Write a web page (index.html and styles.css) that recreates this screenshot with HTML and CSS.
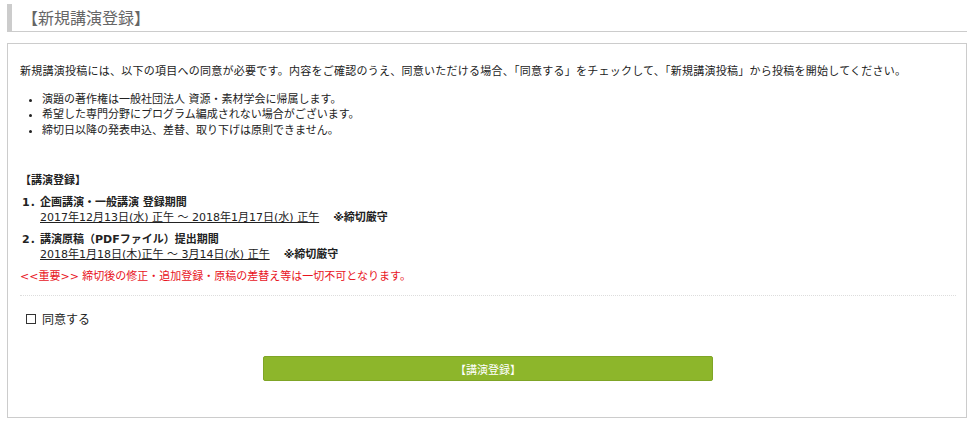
FILE: index.html
```html
<!DOCTYPE html>
<html lang="ja">
<head>
<meta charset="utf-8">
<title>新規講演登録</title>
<link rel="stylesheet" href="styles.css">
</head>
<body>
<div class="page">
  <h1 class="title">【新規講演登録】</h1>
  <div class="box">
    <p class="intro">新規講演投稿には、以下の項目への同意が必要です。内容をご確認のうえ、同意いただける場合、「同意する」をチェックして、「新規講演投稿」から投稿を開始してください。</p>
    <ul class="notes">
      <li>演題の著作権は一般社団法人 資源・素材学会に帰属します。</li>
      <li>希望した専門分野にプログラム編成されない場合がございます。</li>
      <li>締切日以降の発表申込、差替、取り下げは原則できません。</li>
    </ul>
    <p class="head">【講演登録】</p>
    <div class="item">
      <span class="num">1．</span>
      <div class="item-body">
        <div class="item-title">企画講演・一般講演 登録期間</div>
        <div class="period"><u>2017年12月13日(水) 正午 ～ 2018年1月17日(水) 正午</u><b class="strict">※締切厳守</b></div>
      </div>
    </div>
    <div class="item">
      <span class="num">2．</span>
      <div class="item-body">
        <div class="item-title">講演原稿（PDFファイル）提出期間</div>
        <div class="period"><u>2018年1月18日(木)正午 ～ 3月14日(水) 正午</u><b class="strict">※締切厳守</b></div>
      </div>
    </div>
    <p class="warn">&lt;&lt;重要&gt;&gt; 締切後の修正・追加登録・原稿の差替え等は一切不可となります。</p>
    <div class="agree"><span class="check"></span>同意する</div>
    <div class="actions"><button class="submit" type="button">【講演登録】</button></div>
  </div>
</div>
</body>
</html>
```
FILE: styles.css
```css
html, body {
  margin: 0;
  padding: 0;
  background: #fff;
}
body {
  font-family: "DejaVu Sans", "Noto Sans CJK JP", sans-serif;
  font-size: 11px;
  color: #222;
}
.page {
  padding: 4px 8px 0 7px;
}
.title {
  margin: 0;
  height: 28px;
  line-height: 27px;
  font-family: "Noto Sans CJK JP", sans-serif;
  font-size: 16px;
  font-weight: normal;
  color: #666;
  border-left: 5px solid #ccc;
  border-bottom: 1px solid #ccc;
  padding-left: 10px;
  box-sizing: border-box;
}
.box {
  margin-top: 11px;
  border: 1px solid #ccc;
  padding: 20px 10px 36px 12px;
  line-height: 15.5px;
}
.intro {
  margin: 0;
  letter-spacing: 0.25px;
}
.notes {
  margin: 12px 0 0;
  padding-left: 22px;
}
.head {
  margin: 35px 0 0;
  font-weight: bold;
}
.item {
  display: flex;
  margin-top: 6px;
}
.item + .item {
  margin-top: 6px;
}
.num {
  width: 20px;
  padding-left: 2px;
  font-weight: bold;
  box-sizing: border-box;
}
.item-title {
  font-weight: bold;
}
.strict {
  margin-left: 14px;
}
.warn {
  margin: 6px 0 0;
  color: #e8141d;
}
.agree {
  margin-top: 11px;
  border-top: 1px dotted #ddd;
  padding: 15px 0 0 6px;
  display: flex;
  align-items: center;
  font-family: "Noto Sans CJK JP", sans-serif;
  font-size: 12px;
  line-height: 16px;
}
.check {
  display: inline-block;
  width: 8px;
  height: 8px;
  border: 1px solid #333;
  margin-right: 6px;
}
.actions {
  display: flex;
  justify-content: center;
  margin-top: 29px;
}
.submit {
  width: 450px;
  height: 25px;
  background: #8db62b;
  border: 1px solid #7fa526;
  border-radius: 2px;
  color: #fff;
  font-family: "Noto Sans CJK JP", sans-serif;
  font-size: 11px;
  padding: 0;
}
```
